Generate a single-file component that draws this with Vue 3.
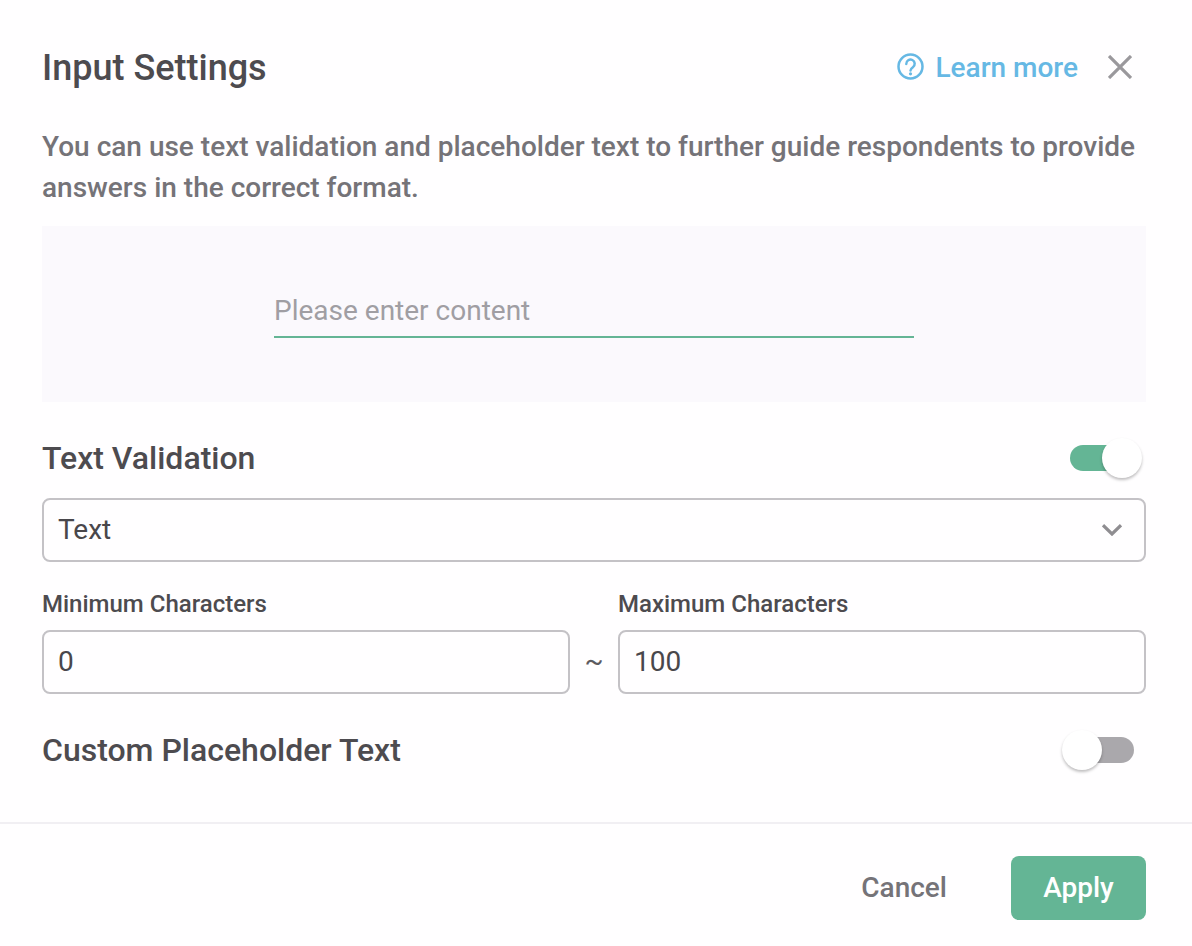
<script setup>
const title = 'Input Settings'
</script>

<template>
  <div class="dialog">
    <header class="head">
      <h1 class="title">{{ title }}</h1>
      <a class="learn">
        <svg class="help" viewBox="0 0 28 28" width="28" height="28" fill="none" stroke="#66b8e4" stroke-width="2.500">
          <circle cx="14.500" cy="13.500" r="12" />
          <path d="M10.300 10.900a4.200 4.200 0 1 1 6.600 3.300c-1.500 1-2.400 1.700-2.400 3.300" stroke-linecap="round" />
          <circle cx="14.500" cy="20.800" r="1.600" fill="#66b8e4" stroke="none" />
        </svg>
        <span>Learn more</span>
      </a>
      <svg class="close" viewBox="0 0 24 24" width="24" height="24" fill="none" stroke="#9a989c" stroke-width="3.200">
        <path d="M1 1l22 22M23 1L1 23" />
      </svg>
    </header>

    <p class="desc">You can use text validation and placeholder text to further guide respondents to provide answers in the correct format.</p>

    <div class="preview">
      <div class="preview-input">Please enter content</div>
    </div>

    <div class="row validation">
      <span class="section">Text Validation</span>
      <span class="switch on"><i class="knob"></i></span>
    </div>

    <div class="field select">
      <span>Text</span>
      <svg viewBox="0 0 20 12" width="20" height="12" fill="none" stroke="#8f8d91" stroke-width="3.200">
        <path d="M1 1.200l9 8.800 9-8.800" />
      </svg>
    </div>

    <div class="range">
      <div class="col">
        <label class="lbl">Minimum Characters</label>
        <div class="field">0</div>
      </div>
      <span class="tilde">~</span>
      <div class="col">
        <label class="lbl">Maximum Characters</label>
        <div class="field">100</div>
      </div>
    </div>

    <div class="row custom">
      <span class="section">Custom Placeholder Text</span>
      <span class="switch"><i class="knob"></i></span>
    </div>

    <footer class="foot">
      <button class="btn cancel">Cancel</button>
      <button class="btn apply">Apply</button>
    </footer>
  </div>
</template>

<style>
html, body { margin: 0; background: #fffeff; }
</style>

<style scoped>
.dialog {
  box-sizing: border-box;
  width: 1192px;
  height: 946px;
  background: #fffeff;
  font-family: Roboto, "Liberation Sans", sans-serif;
  color: #49474b;
  overflow: hidden;
}
.head {
  display: flex;
  align-items: center;
  height: 44px;
  margin: 45px 60px 0 42px;
}
.title {
  margin: 1px auto 0 0;
  font-size: 36px;
  font-weight: 500;
  line-height: 44px;
  color: #4d4b4f;
}
.learn {
  display: flex;
  align-items: center;
  gap: 11px;
  font-size: 28px;
  font-weight: 500;
  color: #66b8e4;
  margin-right: 30px;
}
.help { display: block; }
.close { display: block; }
.desc {
  margin: 37px 42px 0;
  font-size: 28px;
  font-weight: 500;
  line-height: 41px;
  color: #757378;
}
.preview {
  display: flex;
  justify-content: center;
  height: 176px;
  margin: 18px 46px 0 42px;
  background: #fbf9fd;
}
.preview-input {
  box-sizing: border-box;
  width: 640px;
  height: 112px;
  padding-top: 67px;
  border-bottom: 2px solid #64b595;
  font-size: 28px;
  line-height: 36px;
  color: #a09ea3;
}
.row {
  display: flex;
  align-items: center;
  justify-content: space-between;
  height: 44px;
  margin: 0 46px 0 42px;
}
.validation { margin-top: 34px; }
.custom { margin-top: 34px; }
.section {
  font-size: 32px;
  font-weight: 500;
  color: #4d4b4f;
}
.switch {
  position: relative;
  display: block;
  width: 64px;
  height: 26px;
  margin-right: 12px;
  border-radius: 13px;
  background: #aaa8ac;
}
.switch.on { background: #64b595; }
.knob {
  position: absolute;
  top: -7px;
  left: -8px;
  width: 40px;
  height: 40px;
  border-radius: 50%;
  background: #fff;
  box-shadow: 0 2px 3px rgba(0, 0, 0, 0.25);
}
.on .knob { left: 32px; top: -7px; }
.field {
  box-sizing: border-box;
  display: flex;
  align-items: center;
  height: 64px;
  padding: 0 14px 1px;
  border: 2px solid #c4c2c6;
  border-radius: 8px;
  font-size: 28px;
  color: #49474b;
}
.select {
  justify-content: space-between;
  margin: 18px 46px 0 42px;
  padding-right: 22px;
}
.range {
  display: flex;
  align-items: flex-end;
  margin: 27px 46px 0 42px;
}
.col { flex: 1; min-width: 0; }
.lbl {
  display: block;
  margin-bottom: 11px;
  font-size: 24px;
  font-weight: 500;
  line-height: 30px;
  color: #4d4b4f;
}
.tilde {
  width: 48px;
  height: 64px;
  line-height: 62px;
  text-align: center;
  font-size: 28px;
  color: #5d5b60;
}
.foot {
  display: flex;
  align-items: center;
  justify-content: flex-end;
  gap: 64px;
  margin-top: 50px;
  padding: 32px 46px 0 0;
  border-top: 2px solid #f1eff3;
}
.btn {
  border: 0;
  background: none;
  padding: 0;
  font-family: inherit;
  font-size: 28px;
  font-weight: 500;
}
.cancel { color: #757378; padding-bottom: 2px; }
.apply {
  width: 135px;
  height: 64px;
  padding-bottom: 1px;
  border-radius: 8px;
  background: #64b595;
  color: #fff;
}
</style>
